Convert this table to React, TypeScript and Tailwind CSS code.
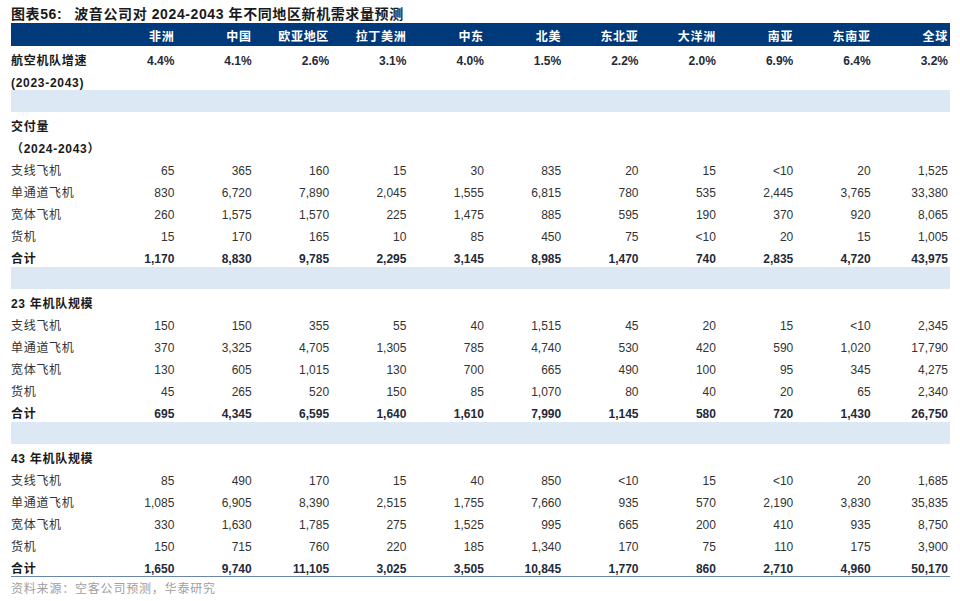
const regions = ["非洲", "中国", "欧亚地区", "拉丁美洲", "中东", "北美", "东北亚", "大洋洲", "南亚", "东南亚", "全球"];

type Row = { label: string; values?: string[]; kind: "head" | "data" | "total" | "band" | "growth" };

const rows: Row[] = [
  { label: "航空机队增速", kind: "growth", values: ["4.4%", "4.1%", "2.6%", "3.1%", "4.0%", "1.5%", "2.2%", "2.0%", "6.9%", "6.4%", "3.2%"] },
  { label: "(2023-2043)", kind: "head" },
  { label: "", kind: "band" },
  { label: "交付量", kind: "head" },
  { label: "（2024-2043）", kind: "head" },
  { label: "支线飞机", kind: "data", values: ["65", "365", "160", "15", "30", "835", "20", "15", "<10", "20", "1,525"] },
  { label: "单通道飞机", kind: "data", values: ["830", "6,720", "7,890", "2,045", "1,555", "6,815", "780", "535", "2,445", "3,765", "33,380"] },
  { label: "宽体飞机", kind: "data", values: ["260", "1,575", "1,570", "225", "1,475", "885", "595", "190", "370", "920", "8,065"] },
  { label: "货机", kind: "data", values: ["15", "170", "165", "10", "85", "450", "75", "<10", "20", "15", "1,005"] },
  { label: "合计", kind: "total", values: ["1,170", "8,830", "9,785", "2,295", "3,145", "8,985", "1,470", "740", "2,835", "4,720", "43,975"] },
  { label: "", kind: "band" },
  { label: "23 年机队规模", kind: "head" },
  { label: "支线飞机", kind: "data", values: ["150", "150", "355", "55", "40", "1,515", "45", "20", "15", "<10", "2,345"] },
  { label: "单通道飞机", kind: "data", values: ["370", "3,325", "4,705", "1,305", "785", "4,740", "530", "420", "590", "1,020", "17,790"] },
  { label: "宽体飞机", kind: "data", values: ["130", "605", "1,015", "130", "700", "665", "490", "100", "95", "345", "4,275"] },
  { label: "货机", kind: "data", values: ["45", "265", "520", "150", "85", "1,070", "80", "40", "20", "65", "2,340"] },
  { label: "合计", kind: "total", values: ["695", "4,345", "6,595", "1,640", "1,610", "7,990", "1,145", "580", "720", "1,430", "26,750"] },
  { label: "", kind: "band" },
  { label: "43 年机队规模", kind: "head" },
  { label: "支线飞机", kind: "data", values: ["85", "490", "170", "15", "40", "850", "<10", "15", "<10", "20", "1,685"] },
  { label: "单通道飞机", kind: "data", values: ["1,085", "6,905", "8,390", "2,515", "1,755", "7,660", "935", "570", "2,190", "3,830", "35,835"] },
  { label: "宽体飞机", kind: "data", values: ["330", "1,630", "1,785", "275", "1,525", "995", "665", "200", "410", "935", "8,750"] },
  { label: "货机", kind: "data", values: ["150", "715", "760", "220", "185", "1,340", "170", "75", "110", "175", "3,900"] },
  { label: "合计", kind: "total", values: ["1,650", "9,740", "11,105", "3,025", "3,505", "10,845", "1,770", "860", "2,710", "4,960", "50,170"] },
];

const font = { fontFamily: '"Liberation Sans", "Noto Sans CJK SC", sans-serif' };

function TableRow({ row, last }: { row: Row; last: boolean }) {
  if (row.kind === "band") {
    return <div className="col-span-12 h-[22px] bg-[#dde8f5]" />;
  }
  const bold = row.kind !== "data";
  const height = row.kind === "total" ? "h-[23px]" : "h-[22px]";
  return (
    <>
      <div
        className={`${height} pt-[8px] text-[12px] leading-[14px] tracking-[0.7px] whitespace-nowrap ${
          bold ? "font-bold text-[#1a1a1a]" : "text-[#333]"
        } ${last ? "border-b border-[#6b86ad]" : ""}`}
      >
        {row.label}
      </div>
      {regions.map((_, i) => (
        <div
          key={i}
          className={`${height} pt-[8px] pr-[2px] text-right text-[12px] leading-[14px] ${
            bold ? "font-bold text-[#1f2a3a]" : "text-[#333]"
          } ${last ? "border-b border-[#6b86ad]" : ""}`}
        >
          {row.values ? row.values[i] : ""}
        </div>
      ))}
    </>
  );
}

export default function App() {
  return (
    <div className="w-[960px] h-[601px] bg-white overflow-hidden" style={font}>
      <div className="ml-[11px] w-[939px]">
        <div className="h-[23px] flex items-center pt-[5px] text-[14px] font-bold text-[#1a1a1a] tracking-[0.6px] whitespace-nowrap">
          <span>图表56:</span>
          <span className="ml-[12px]">波音公司对 2024-2043 年不同地区新机需求量预测</span>
        </div>

        <div className="grid grid-cols-[88px_repeat(11,minmax(0,1fr))]">
          <div className="h-[23px] bg-[#003a7a]" />
          {regions.map((r) => (
            <div
              key={r}
              className="h-[23px] bg-[#003a7a] pt-[7px] pr-[2px] text-right text-[12px] leading-[14px] font-bold text-white tracking-[0.7px]"
            >
              {r}
            </div>
          ))}

          {rows.map((row, i) => (
            <TableRow key={i} row={row} last={i === rows.length - 1} />
          ))}
        </div>

        <div className="h-[22px] pt-[5px] text-[12px] leading-[14px] text-[#a0a0a0] tracking-[0.8px]">
          资料来源：空客公司预测，华泰研究
        </div>
      </div>
    </div>
  );
}
